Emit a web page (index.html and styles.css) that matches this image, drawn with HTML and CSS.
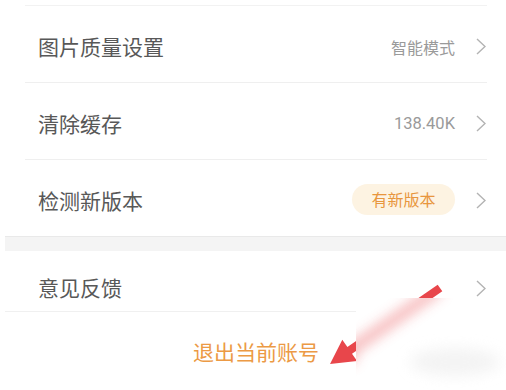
FILE: index.html
```html
<!DOCTYPE html>
<html lang="zh">
<head>
<meta charset="utf-8">
<link rel="stylesheet" href="styles.css">
</head>
<body>
<div class="page">
  <div class="group">
    <div class="row">
      <span class="label">图片质量设置</span>
      <span class="value">智能模式</span>
      <svg class="chev" viewBox="0 0 10 17" width="10" height="17"><polyline points="1,1 9,8.5 1,16"/></svg>
    </div>
    <div class="row">
      <span class="label">清除缓存</span>
      <span class="value num">138.40K</span>
      <svg class="chev" viewBox="0 0 10 17" width="10" height="17"><polyline points="1,1 9,8.5 1,16"/></svg>
    </div>
    <div class="row row-noline">
      <span class="label">检测新版本</span>
      <span class="badge">有新版本</span>
      <svg class="chev" viewBox="0 0 10 17" width="10" height="17"><polyline points="1,1 9,8.5 1,16"/></svg>
    </div>
  </div>
  <div class="band"></div>
  <div class="row row-wide">
    <span class="label">意见反馈</span>
    <svg class="chev" viewBox="0 0 10 17" width="10" height="17"><polyline points="1,1 9,8.5 1,16"/></svg>
  </div>
  <div class="logout">退出当前账号</div>
  <svg class="arrow" viewBox="0 0 506 390" width="506" height="390">
    <defs>
      <clipPath id="outside">
        <path clip-rule="evenodd" d="M0 0H506V390H0Z M356 298H506V390H356Z"/>
      </clipPath>
    </defs>
    <polygon clip-path="url(#outside)" points="330,364 342.3,339.7 347.4,347.1 437.7,284.7 442.3,291.3 352,353.7 357.1,361.1"/>
  </svg>
  <div class="blur">
    <svg viewBox="356 298 150 92" width="150" height="92">
      <defs>
        <filter id="soft" x="-50%" y="-50%" width="200%" height="200%">
          <feGaussianBlur stdDeviation="7"/>
        </filter>
      </defs>
      <polygon class="smear" filter="url(#soft)" points="330,364 342.3,339.7 347.4,347.1 437.7,284.7 442.3,291.3 352,353.7 357.1,361.1"/>
      <ellipse class="haze" filter="url(#soft)" cx="455" cy="362" rx="45" ry="14"/>
    </svg>
  </div>
</div>
</body>
</html>
```

FILE: styles.css
```css
* { box-sizing: border-box; }
html, body { margin: 0; padding: 0; background: #fff; }
body {
  font-family: "Noto Sans CJK SC", "Noto Sans", sans-serif;
}
.page {
  position: relative;
  width: 506px;
  height: 390px;
  overflow: hidden;
  background: #fff;
}
.group {
  margin: 5px 19px 0 25px;
  border-top: 1px solid #f2f2f2;
}
.row {
  display: flex;
  align-items: center;
  height: 77px;
  padding: 5px 1px 0 13px;
  border-bottom: 1px solid #efefef;
}
.row-noline { border-bottom: none; height: 76px; }
.label {
  flex: 1;
  font-size: 21px;
  color: #585858;
  line-height: 1.2;
}
.value {
  font-size: 16px;
  color: #9a9a9a;
  margin-right: 21px;
}
.value.num { font-family: "Roboto", "Noto Sans", sans-serif; font-size: 16.5px; }
.badge {
  display: flex;
  align-items: center;
  justify-content: center;
  width: 103px;
  height: 31px;
  border-radius: 16px;
  background: #fdf3e2;
  color: #e8963e;
  font-size: 16px;
  margin-right: 21px;
  margin-top: -3px;
}
.chev polyline {
  fill: none;
  stroke: #b3b3b3;
  stroke-width: 1.4;
}
.band {
  margin-left: 5px;
  height: 15px;
  background: #f4f4f4;
  border-top: 1px solid #e9e9e9;
}
.row-wide {
  margin-left: 5px;
  height: 61px;
  padding: 14px 20px 0 33px;
  border-bottom: 1px solid #f0f0f0;
}
.logout {
  padding: 27px 0 0 6px;
  text-align: center;
  font-size: 21px;
  line-height: 1.2;
  color: #ec9a45;
}
.arrow {
  position: absolute;
  left: 0;
  top: 0;
  pointer-events: none;
}
.arrow polygon { fill: #e8464b; }
.blur {
  position: absolute;
  left: 356px;
  top: 298px;
  width: 150px;
  height: 92px;
  overflow: hidden;
  background: #fff;
}
.blur svg { display: block; }
.smear { fill: #e8464b; opacity: 0.55; }
.haze { fill: #ececec; opacity: 0.6; }
```
